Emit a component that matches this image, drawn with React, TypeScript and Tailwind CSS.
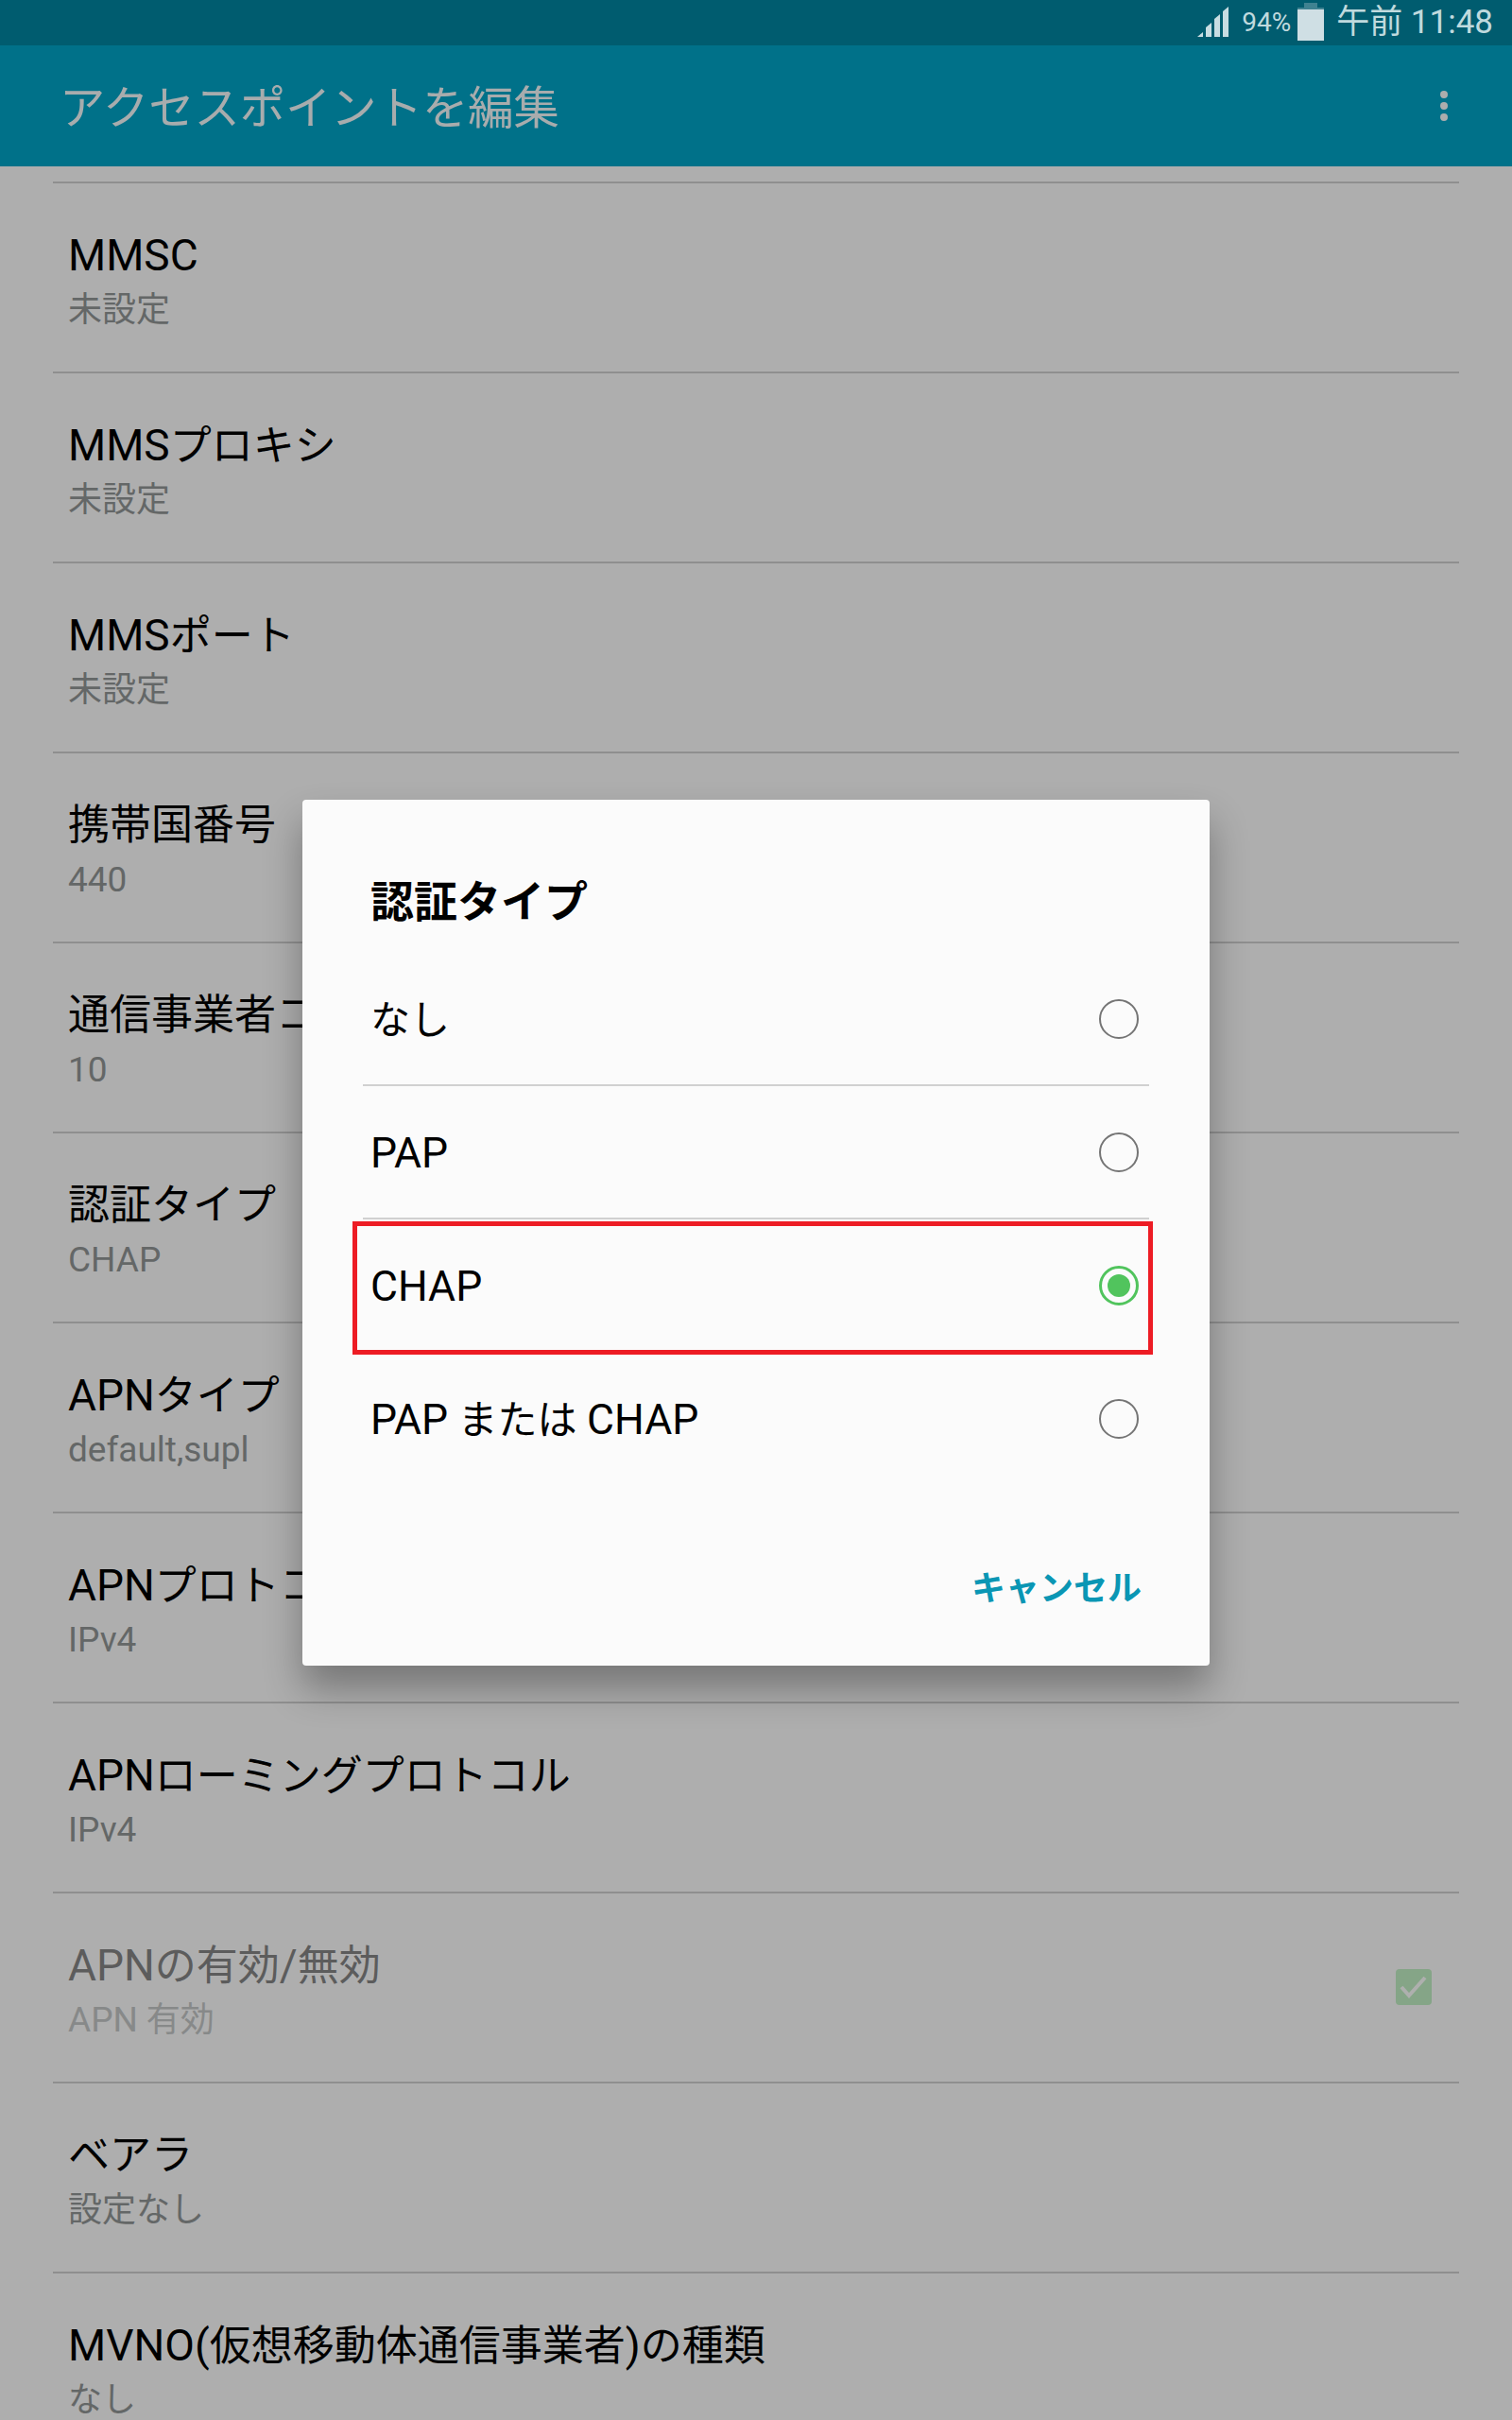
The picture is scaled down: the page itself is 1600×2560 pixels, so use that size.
import { Fragment } from 'react'

const ROWS = [
  { title: 'MMSC', value: '未設定' },
  { title: 'MMSプロキシ', value: '未設定' },
  { title: 'MMSポート', value: '未設定' },
  { title: '携帯国番号', value: '440' },
  { title: '通信事業者コード', value: '10' },
  { title: '認証タイプ', value: 'CHAP' },
  { title: 'APNタイプ', value: 'default,supl' },
  { title: 'APNプロトコル', value: 'IPv4' },
  { title: 'APNローミングプロトコル', value: 'IPv4' },
  { title: 'APNの有効/無効', value: 'APN 有効', disabled: true },
  { title: 'ベアラ', value: '設定なし' },
  { title: 'MVNO(仮想移動体通信事業者)の種類', value: 'なし' },
]

const OPTIONS = ['なし', 'PAP', 'CHAP', 'PAP または CHAP']

// 欧文だけ和文より少し大きく組む
function Mixed({ text, latin }: { text: string; latin: string }) {
  return (
    <>
      {text.split(/([A-Za-z0-9(),/]+)/).map((part, i) =>
        i % 2 === 1 ? <span key={i} className={latin}>{part}</span> : part,
      )}
    </>
  )
}

function Radio({ checked }: { checked?: boolean }) {
  if (checked) {
    return (
      <span className="flex h-[42px] w-[42px] items-center justify-center rounded-full border-[3px] border-[#51c45d]">
        <span className="h-6 w-6 rounded-full bg-[#51c45d]" />
      </span>
    )
  }
  return <span className="h-[42px] w-[42px] rounded-full border-[2.5px] border-[#757575]" />
}

function SignalIcon() {
  return (
    <svg width="33" height="33" viewBox="0 0 33 33" className="mr-[14px] mt-[7px] fill-[#c8dde2]">
      <path d="M0 32 6 27V32Z" />
      <path d="M9 32V22L15 17V32Z" />
      <path d="M18 32V13L24 8V32Z" />
      <path d="M27 32V5L33 0V32Z" />
    </svg>
  )
}

export default function App() {
  return (
    <div className="relative h-[2560px] w-[1600px] overflow-hidden bg-[#aeaeae] [font-family:Roboto,'Noto_Sans_CJK_JP',sans-serif]">
      {/* ステータスバー */}
      <div className="flex h-12 items-start justify-end bg-[#005c6f] pr-[20px] text-[#c0dade]">
        <SignalIcon />
        <span className="mt-[4px] text-[28px] leading-[40px]">94%</span>
        <span className="ml-[7px] mt-[3px] flex flex-col items-center">
          <span className="h-[5px] w-[14px] bg-[#3f8291]" />
          <span className="h-[2px] w-[28px] bg-[#3f8291]" />
          <span className="h-[33px] w-[28px] bg-[#cfdfe4]" />
        </span>
        <span className="ml-[13px] mt-[2px] text-[35px] leading-[44px]">午前 11:48</span>
      </div>

      {/* アクションバー */}
      <div className="flex h-[128px] items-center justify-between bg-[#007189] pl-[63px] pr-[68px]">
        <span className="mt-[6px] text-[48.3px] leading-[60px] text-[#a8acad]">アクセスポイントを編集</span>
        <span className="flex flex-col gap-1">
          <span className="h-2 w-2 rounded-full bg-[#adadad]" />
          <span className="h-2 w-2 rounded-full bg-[#adadad]" />
          <span className="h-2 w-2 rounded-full bg-[#adadad]" />
        </span>
      </div>

      {/* 設定リスト */}
      <div className="mx-[56px] mt-4">
        {ROWS.map((row) => (
          <div key={row.title} className="flex h-[201px] items-start justify-between border-t-2 border-[#8f8f8f] pl-4 pr-4 pt-[45px]">
            <div>
              <div className={`h-[64px] text-[44px] leading-[62px] ${row.disabled ? 'text-[#5c5c5c]' : 'text-black'}`}>
                <Mixed text={row.title} latin="text-[46px]" />
              </div>
              <div className={`h-[50px] text-[36px] leading-[50px] ${row.disabled ? 'text-[#878989]' : 'text-[#646767]'}`}>
                <Mixed text={row.value} latin="text-[37px]" />
              </div>
            </div>
            {row.disabled && (
              <span className="mr-[13px] mt-[35px] flex h-[38px] w-[38px] items-center justify-center rounded-[4px] bg-[#85a587]">
                <svg width="30" height="26" viewBox="0 0 30 26" fill="none" className="stroke-[#aeb0ae]" strokeWidth="4">
                  <path d="M2 13 10 22 27 3" />
                </svg>
              </span>
            )}
          </div>
        ))}
      </div>

      {/* 認証タイプ ダイアログ */}
      <div className="absolute left-[320px] top-[846px] h-[916px] w-[960px] rounded-[4px] bg-[#fbfbfb] shadow-[0_24px_40px_rgba(0,0,0,0.32)]">
        <div className="pl-[72px] pt-[75px] text-[46px] font-bold leading-[66px] text-black">認証タイプ</div>
        <div className="mx-[64px] mt-[21px]">
          {OPTIONS.map((label, i) => (
            <Fragment key={label}>
              <div className="flex h-[139px] items-center justify-between pl-[8px] pr-[11px] text-[42px] text-black">
                <span className="mt-[3px]"><Mixed text={label} latin="text-[44.5px]" /></span>
                <Radio checked={label === 'CHAP'} />
              </div>
              {i < 3 && <div className="h-[2px] bg-[#d0d0d0]" />}
            </Fragment>
          ))}
        </div>
        <div className="absolute bottom-[56px] right-[72px] text-[36px] font-bold leading-[50px] text-[#0a96b4]">キャンセル</div>

        {/* 赤い枠 */}
        <div className="absolute left-[53px] top-[446px] h-[141px] w-[847px] border-[5px] border-[#ed1c24]" />
      </div>
    </div>
  )
}
